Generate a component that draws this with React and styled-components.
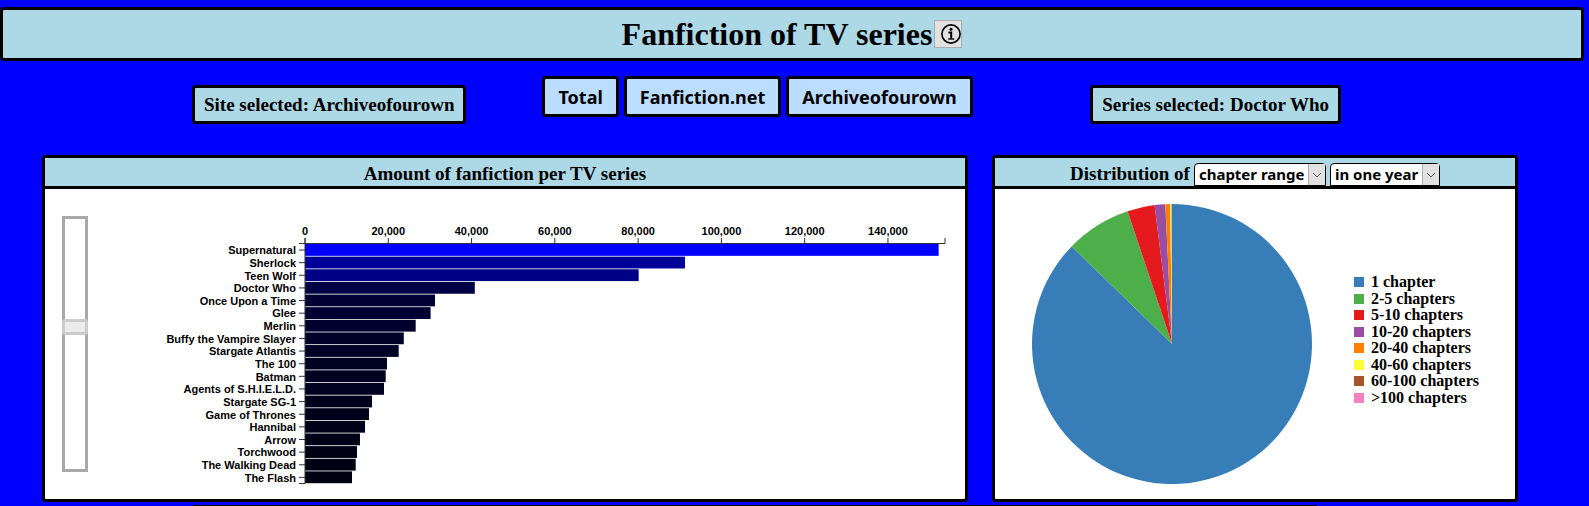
import React from 'react';
import styled, { createGlobalStyle } from 'styled-components';

const serif = '"Liberation Serif", "Times New Roman", serif';
const ui = '"Noto Sans", "Open Sans", sans-serif';

const GlobalStyle = createGlobalStyle`
  * { box-sizing: border-box; }
  body { margin: 0; background: #0000ff; color: #000; font-family: ${serif}; }
  html { scrollbar-width: none; }
`;

const Page = styled.div`
  display: flex;
  flex-direction: column;
  padding-top: 7px;
`;

const Header = styled.header`
  display: flex;
  align-items: center;
  justify-content: center;
  height: 54px;
  margin-right: 5px;
  border: 3px solid #000;
  border-radius: 4px;
  background: lightblue;
`;

const Title = styled.h1`
  margin: 0;
  font-size: 32px;
  line-height: 36px;
`;

const InfoButton = styled.button`
  display: flex;
  align-items: center;
  justify-content: flex-end;
  width: 28px;
  height: 28px;
  margin-left: 2px;
  padding: 0;
  border: 1px solid #adadad;
  background: #e1e1e1;
`;

const Toolbar = styled.div`
  display: flex;
  align-items: flex-start;
  padding: 15px 248px 31px 192px;
`;

const Selected = styled.p`
  margin: 9px 0 0;
  padding: 6px 9px;
  border: 3px solid #000;
  border-radius: 4px;
  background: lightblue;
  font-size: 19px;
  font-weight: bold;
  line-height: 21px;
  white-space: nowrap;
`;

const Sites = styled.nav`
  display: flex;
  gap: 5px;
  margin: 0 auto 0 76px;
`;

const SiteButton = styled.button`
  height: 41px;
  padding: 0 13px;
  border: 3px solid #000;
  border-radius: 4px;
  background: #bbddff;
  color: #000;
  font: bold 18px/24px ${ui};
`;

const Panels = styled.main`
  display: grid;
  grid-template-columns: 926fr 526fr;
  gap: 24px;
  padding: 0 71px 3px 42px;
`;

const Panel = styled.section`
  display: flex;
  flex-direction: column;
  min-width: 0;
  border: 3px solid #000;
  border-radius: 4px;
  background: #fff;
`;

const LowerPanel = styled(Panel)`
  margin: 0 271px 0 192px;
`;

const PanelHeader = styled.div`
  display: flex;
  align-items: flex-end;
  justify-content: center;
  gap: 4px;
  height: 31px;
  border-bottom: 3px solid #000;
  background: lightblue;
`;

const PanelTitle = styled.h2`
  margin: 0;
  font-size: 19px;
  line-height: 24px;
`;

const SelectBox = styled.span`
  display: grid;
  align-items: stretch;
`;

const Select = styled.select`
  grid-area: 1 / 1;
  appearance: none;
  height: 23px;
  padding: 0 20px 0 4px;
  border: 1px solid #000;
  border-radius: 4px 4px 0 0;
  background: #fff;
  color: #000;
  font: bold 15px/21px ${ui};
`;

const SelectArrow = styled.span`
  grid-area: 1 / 1;
  display: flex;
  align-items: center;
  justify-content: center;
  justify-self: end;
  width: 17px;
  margin: 1px 1px 1px 0;
  border-left: 1px solid #adadad;
  background: #e1e1e1;
  pointer-events: none;
`;

const PanelBody = styled.div`
  display: flex;
  align-items: flex-start;
  min-height: 310px;
`;

const Slider = styled.input`
  appearance: none;
  writing-mode: vertical-lr;
  flex: none;
  width: 26px;
  height: 256px;
  margin: 27px 0 0 17px;
  background: #fff;
  box-shadow: inset 0 0 0 3px #a9a9a9;

  &::-webkit-slider-thumb {
    appearance: none;
    width: 26px;
    height: 16px;
    border: 3px solid #cccccc;
    border-radius: 3px;
    background: #ececec;
  }
`;

const BarChart = styled.svg`
  flex: 1;
  min-width: 0;
  font: bold 11px "Liberation Sans", Arial, sans-serif;
`;

const PieChart = styled.svg`
  flex: 0 1 280px;
  min-width: 0;
  margin: 15px 0 0 37px;
`;

const Legend = styled.ul`
  display: grid;
  grid-auto-rows: 1fr;
  height: 132px;
  margin: 85px 0 0 42px;
  padding: 0;
  list-style: none;
  font-size: 16px;
  font-weight: bold;
  line-height: 16px;
  white-space: nowrap;
`;

const LegendItem = styled.li`
  display: flex;
  align-items: center;
  gap: 7px;
`;

const Swatch = styled.span`
  width: 10px;
  height: 10px;
  background: ${(p) => p.$color};
`;

const series = [
  ['Supernatural', 152170],
  ['Sherlock', 91250],
  ['Teen Wolf', 80130],
  ['Doctor Who', 40775],
  ['Once Upon a Time', 31217],
  ['Glee', 30160],
  ['Merlin', 26580],
  ['Buffy the Vampire Slayer', 23725],
  ['Stargate Atlantis', 22500],
  ['The 100', 19690],
  ['Batman', 19380],
  ['Agents of S.H.I.E.L.D.', 18970],
  ['Stargate SG-1', 16090],
  ['Game of Thrones', 15370],
  ['Hannibal', 14410],
  ['Arrow', 13200],
  ['Torchwood', 12490],
  ['The Walking Dead', 12175],
  ['The Flash', 11290],
];
const ticks = [0, 20000, 40000, 60000, 80000, 100000, 120000, 140000];

const LEFT = 217;
const TOP = 54;
const AXIS_WIDTH = 640;
const AXIS_HEIGHT = 240;
const DOMAIN = 153700;
const STEP = AXIS_HEIGHT / series.length;
const scale = (v) => (v / DOMAIN) * AXIS_WIDTH;

function SeriesChart() {
  return (
    <BarChart viewBox="0 0 877 310" role="img" aria-label="Amount of fanfiction per TV series">
      <g transform={`translate(${LEFT} ${TOP})`}>
        {series.map(([name, count], i) => (
          <g key={name} transform={`translate(0 ${i * STEP})`}>
            <rect
              x="0"
              y="1"
              width={scale(count)}
              height={STEP - 0.8}
              fill={`rgb(0, 0, ${Math.round((count / series[0][1]) * 255)})`}
            />
            <path d={`M-6 ${STEP / 2 + 0.7}H0`} stroke="#333" />
            <text x="-9" y={STEP / 2 + 5} textAnchor="end">{name}</text>
          </g>
        ))}
        {ticks.map((t) => (
          <g key={t} transform={`translate(${scale(t)} 0)`}>
            <path d="M0 -5V1" stroke="#333" />
            <text y="-8" textAnchor="middle">{t.toLocaleString('en-US')}</text>
          </g>
        ))}
        <path d={`M0 -5V0.5H${AXIS_WIDTH}V-5`} fill="none" stroke="#333" />
        <path d={`M-6 0.5H0V${AXIS_HEIGHT + 0.5}H-6`} fill="none" stroke="#333" />
      </g>
    </BarChart>
  );
}

const ranges = [
  ['1 chapter', 314.2, '#377eb8'],
  ['2-5 chapters', 27.3, '#4daf4a'],
  ['5-10 chapters', 11.35, '#e41a1c'],
  ['10-20 chapters', 4.4, '#984ea3'],
  ['20-40 chapters', 2, '#ff7f00'],
  ['40-60 chapters', 0.5, '#ffff33'],
  ['60-100 chapters', 0.15, '#a65628'],
  ['>100 chapters', 0.1, '#f781bf'],
];

function slices() {
  let angle = 0;
  const point = (deg) => {
    const rad = (deg * Math.PI) / 180;
    return `${140 * Math.sin(rad)} ${-140 * Math.cos(rad)}`;
  };
  return ranges.map(([label, size, color]) => {
    const from = angle;
    angle += size;
    return { label, color, d: `M0 0L${point(from)}A140 140 0 ${size > 180 ? 1 : 0} 1 ${point(angle)}Z` };
  });
}

function DropDown({ label, options }) {
  return (
    <SelectBox>
      <Select aria-label={label}>
        {options.map((o) => <option key={o}>{o}</option>)}
      </Select>
      <SelectArrow>
        <svg width="10" height="6" viewBox="0 0 10 6" fill="none" stroke="#555">
          <path d="M1 1L5 5L9 1" />
        </svg>
      </SelectArrow>
    </SelectBox>
  );
}

export default function App() {
  return (
    <Page>
      <GlobalStyle />
      <Header>
        <Title>Fanfiction of TV series</Title>
        <InfoButton aria-label="Information">
          <svg width="20" height="20" viewBox="0 0 20 20" fill="none" stroke="#000">
            <circle cx="10" cy="10" r="9.1" strokeWidth="1.6" />
            <circle cx="10" cy="5.3" r="1.5" fill="#000" stroke="none" />
            <path d="M7.4 8.6H10.2V14.5" strokeWidth="2" />
            <path d="M7.2 15H13.2" strokeWidth="1.4" />
          </svg>
        </InfoButton>
      </Header>
      <Toolbar>
        <Selected>Site selected: Archiveofourown</Selected>
        <Sites>
          <SiteButton>Total</SiteButton>
          <SiteButton>Fanfiction.net</SiteButton>
          <SiteButton>Archiveofourown</SiteButton>
        </Sites>
        <Selected>Series selected: Doctor Who</Selected>
      </Toolbar>
      <Panels>
        <Panel>
          <PanelHeader>
            <PanelTitle>Amount of fanfiction per TV series</PanelTitle>
          </PanelHeader>
          <PanelBody>
            <Slider type="range" min="0" max="100" defaultValue="43" aria-label="Scroll through series" />
            <SeriesChart />
          </PanelBody>
        </Panel>
        <Panel>
          <PanelHeader>
            <PanelTitle>Distribution of</PanelTitle>
            <DropDown label="Distribution of" options={['chapter range']} />
            <DropDown label="Period" options={['in one year']} />
          </PanelHeader>
          <PanelBody>
            <PieChart viewBox="-140 -140 280 280" role="img" aria-label="Distribution of chapter range">
              {slices().map((s) => <path key={s.label} d={s.d} fill={s.color} />)}
            </PieChart>
            <Legend>
              {ranges.map(([label, , color]) => (
                <LegendItem key={label}>
                  <Swatch $color={color} />
                  {label}
                </LegendItem>
              ))}
            </Legend>
          </PanelBody>
        </Panel>
      </Panels>
      <LowerPanel />
    </Page>
  );
}
